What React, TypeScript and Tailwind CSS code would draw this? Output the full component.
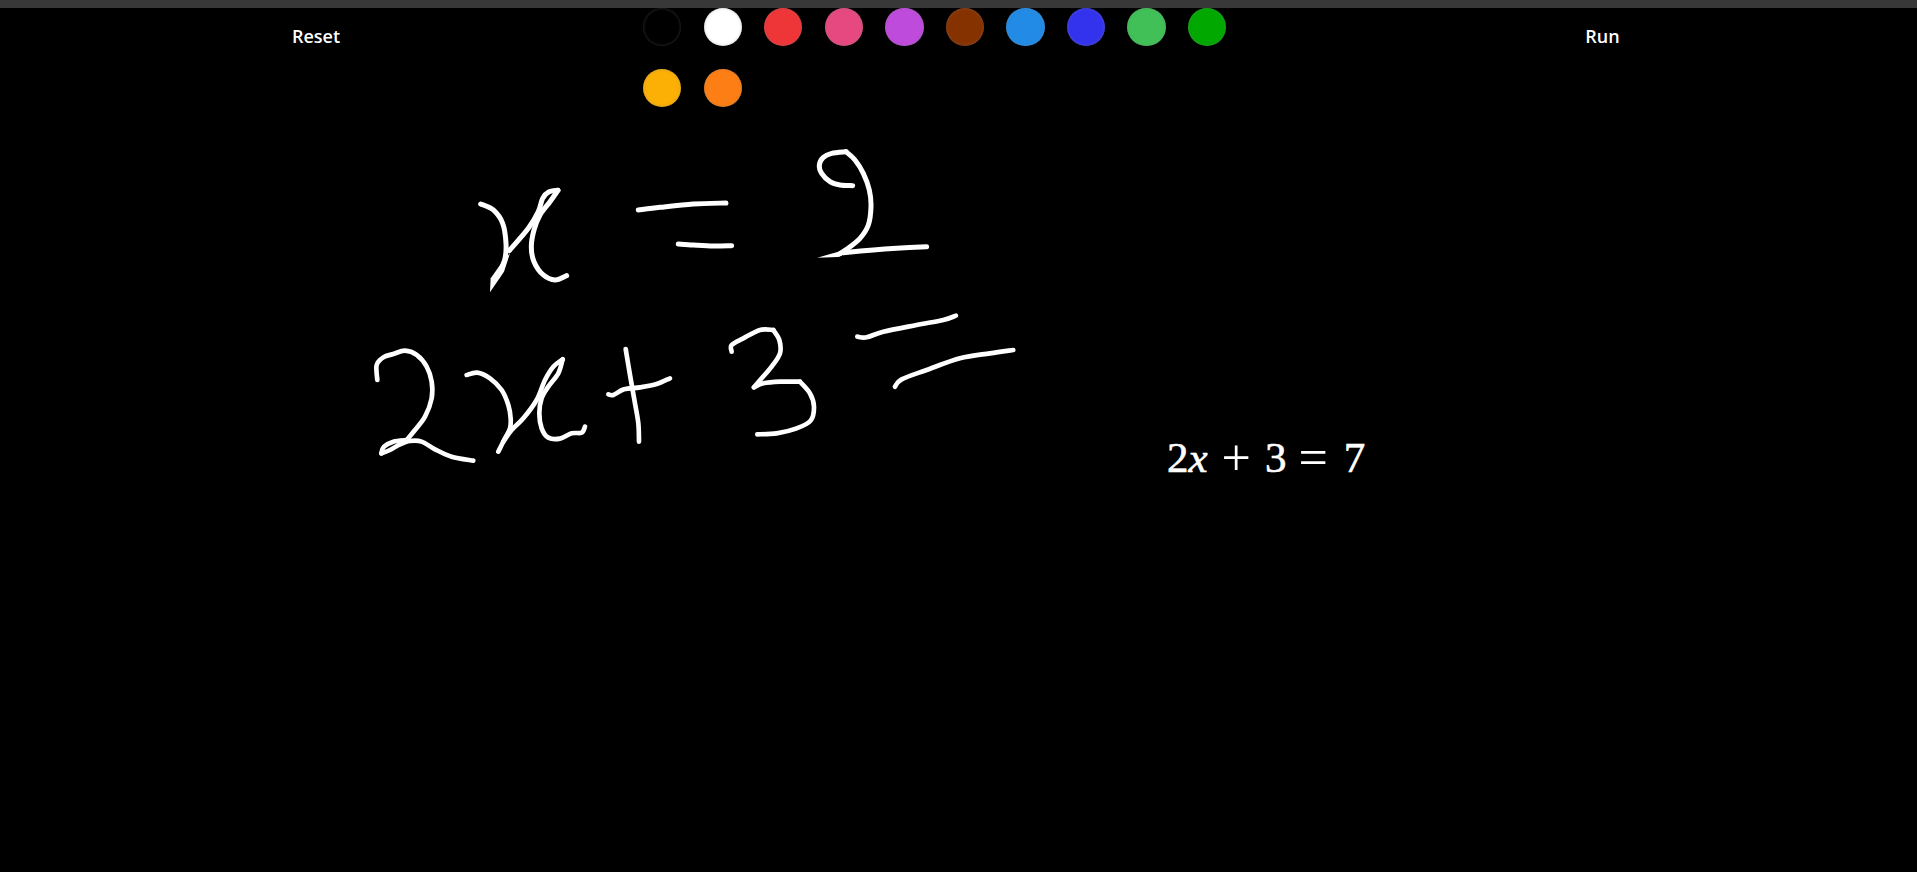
const swatches = [
  "bg-[#000000]", "bg-[#ffffff]", "bg-[#ee3538]", "bg-[#e64980]", "bg-[#be4bdb]", "bg-[#863200]",
  "bg-[#228be6]", "bg-[#3333ee]", "bg-[#40c057]", "bg-[#00a800]", "bg-[#fcb005]", "bg-[#fd7e14]",
];

type Pt = [number, number];

function smooth(p: Pt[]): string {
  let d = `M${p[0][0]} ${p[0][1]}`;
  for (let i = 0; i < p.length - 1; i++) {
    const a = p[Math.max(0, i - 1)];
    const b = p[i];
    const c = p[i + 1];
    const e = p[Math.min(p.length - 1, i + 2)];
    const c1x = b[0] + (c[0] - a[0]) / 6;
    const c1y = b[1] + (c[1] - a[1]) / 6;
    const c2x = c[0] - (e[0] - b[0]) / 6;
    const c2y = c[1] - (e[1] - b[1]) / 6;
    d += ` C${c1x} ${c1y} ${c2x} ${c2y} ${c[0]} ${c[1]}`;
  }
  return d;
}

const groups: { o: Pt; w: number; s: Pt[][]; t?: string[] }[] = [
  {
    o: [460, 130],
    w: 15,
    s: [
      [[62, 222], [100, 240], [128, 280], [138, 340], [134, 390], [112, 440]],
      [[148, 362], [205, 295], [235, 245], [248, 205], [266, 186], [294, 181]],
      [[294, 181], [270, 215], [240, 255], [222, 300], [214, 350], [222, 395], [250, 435], [285, 450], [320, 437]],
      [[535, 240], [600, 232], [700, 222], [798, 219]],
      [[655, 342], [700, 345], [760, 348], [815, 347]],
    ],
    t: ["M90 487 L92 445 L125 398 L150 370 L132 425 Z"],
  },
  {
    o: [780, 130],
    w: 15,
    s: [
      [[218, 167], [180, 165], [150, 155], [125, 130], [118, 105], [130, 82], [155, 70], [198, 65]],
      [[198, 65], [225, 90], [250, 130], [268, 180], [273, 230], [265, 285], [240, 325], [200, 358], [178, 372]],
      [[190, 368], [280, 360], [350, 355], [440, 350]],
    ],
    t: ["M112 383 L175 365 L215 362 L175 381 Z"],
  },
  {
    o: [360, 330],
    w: 14,
    s: [
      [[52, 150], [50, 105], [70, 82], [100, 72], [135, 62], [170, 75], [200, 110], [215, 155], [215, 205], [195, 260], [165, 300], [140, 330]],
      [[140, 330], [100, 335], [72, 350], [64, 370]],
      [[64, 370], [90, 360], [120, 343], [150, 333], [185, 335], [225, 358], [275, 380], [340, 392]],
      [[320, 135], [352, 128], [390, 145], [425, 180], [445, 225], [452, 265], [450, 295], [435, 325], [415, 365]],
      [[430, 335], [455, 300], [490, 265], [530, 210], [555, 150], [580, 110], [608, 88]],
      [[608, 88], [595, 130], [565, 170], [545, 205], [538, 250], [545, 295], [565, 323], [600, 326], [635, 310], [665, 308], [675, 290]],
    ],
  },
  {
    o: [600, 300],
    w: 14,
    s: [
      [[77, 147], [90, 225], [105, 310], [115, 370], [117, 425]],
      [[25, 283], [40, 285], [72, 268], [120, 262], [170, 252], [210, 235]],
      [[395, 155], [395, 135], [430, 115], [480, 90], [520, 90]],
      [[520, 90], [538, 120], [540, 160], [515, 200], [485, 235], [462, 262]],
      [[462, 262], [490, 250], [540, 245], [600, 245]],
      [[600, 245], [630, 280], [642, 320], [632, 362], [590, 385], [530, 400], [472, 403]],
      [[772, 110], [800, 112], [850, 95], [950, 75], [1030, 60], [1068, 47]],
      [[885, 260], [905, 238], [980, 210], [1080, 175], [1170, 160], [1240, 150]],
    ],
  },
];

export default function App() {
  return (
    <div className="relative h-screen overflow-hidden bg-black font-['Open_Sans',sans-serif] text-white">
      <div className="h-2 bg-[#383838]" />
      <div className="grid grid-cols-3">
        <div className="flex items-start justify-center pr-[7px] pt-[16px]">
          <button className="text-[18px] font-semibold leading-6">Reset</button>
        </div>
        <div className="flex flex-wrap gap-x-[22.15px] gap-y-[22.2px] pl-1">
          {swatches.map((c, i) => (
            <div
              key={i}
              className={`h-[38.4px] w-[38.4px] rounded-full ${c} shadow-[inset_0_0_3px_rgba(128,128,128,0.45)]`}
            />
          ))}
        </div>
        <div className="flex items-start justify-center pl-[10px] pt-[16px]">
          <button className="text-[18px] font-semibold leading-6">Run</button>
        </div>
      </div>

      <svg className="absolute inset-0 h-full w-full" fill="none">
        {groups.map((g, i) => (
          <g key={i} transform={`translate(${g.o[0]} ${g.o[1]}) scale(0.3333)`}>
            {g.s.map((s, j) => (
              <path
                key={j}
                d={smooth(s)}
                stroke="#ffffff"
                strokeWidth={g.w}
                strokeLinecap="round"
                strokeLinejoin="round"
              />
            ))}
            {g.t?.map((d, j) => <path key={j} d={d} fill="#ffffff" />)}
          </g>
        ))}
      </svg>

      <div className="absolute left-[1167px] top-[428px] flex items-baseline font-['Liberation_Serif',serif] text-[43px] leading-[54px] [-webkit-text-stroke:0.6px_white]">
        <span>2</span>
        <span className="italic">x</span>
        <span className="ml-[14px] translate-y-[3px] text-[52px] [-webkit-text-stroke:0px_white]">+</span>
        <span className="ml-[14px]">3</span>
        <span className="ml-[12px] translate-y-[3px] text-[52px] [-webkit-text-stroke:0px_white]">=</span>
        <span className="ml-[16px]">7</span>
      </div>
    </div>
  );
}
